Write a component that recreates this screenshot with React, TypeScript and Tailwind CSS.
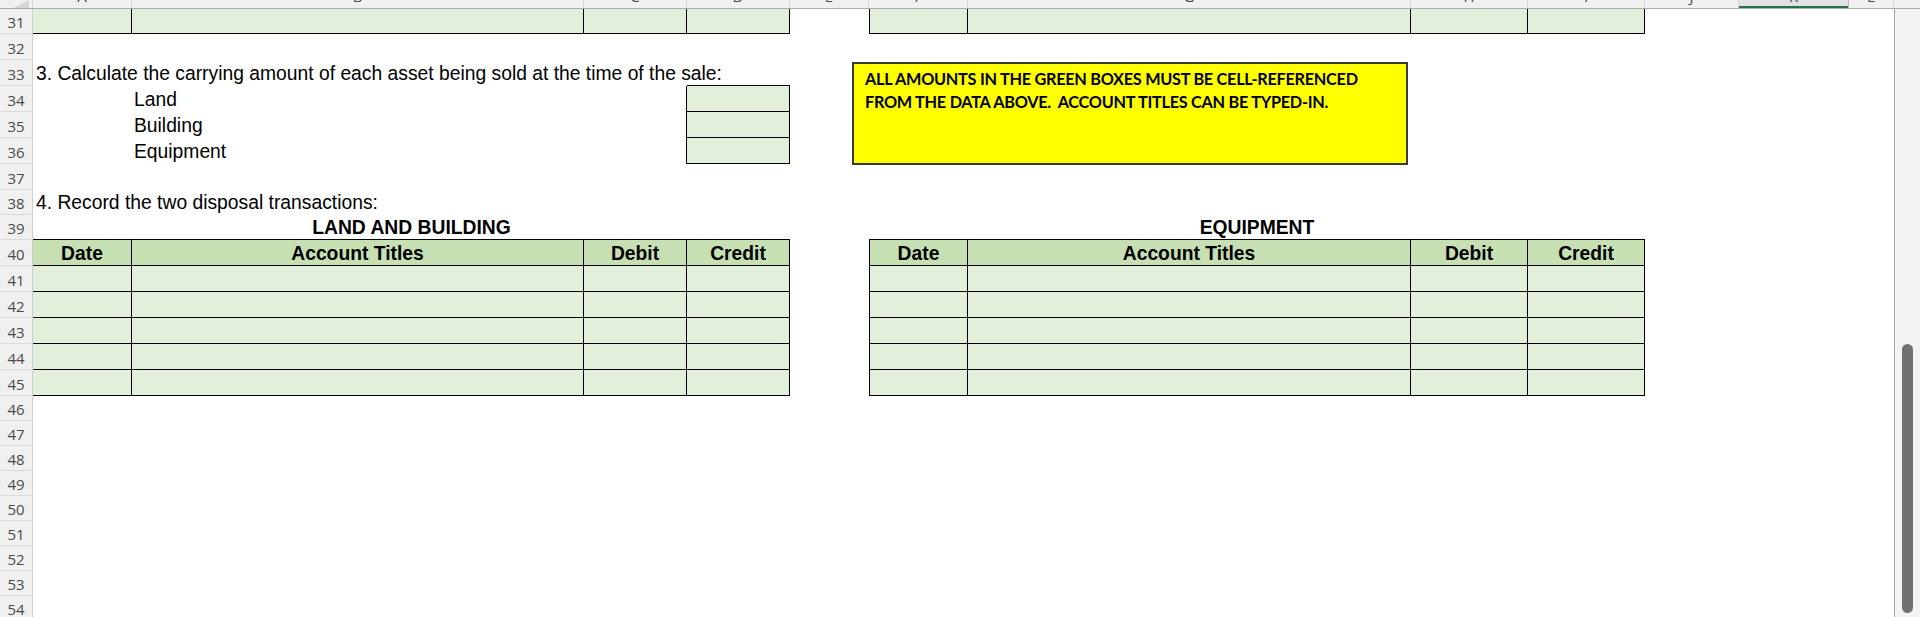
import React from 'react';

type Fill = 'none' | 'body' | 'head';

const W = {
  A: 'w-[99px]',
  B: 'w-[452px]',
  C: 'w-[103px]',
  D: 'w-[103px]',
  E: 'w-[79px]',
  F: 'w-[99px]',
  G: 'w-[443px]',
  H: 'w-[117px]',
  I: 'w-[117px]',
  J: 'w-[94px]',
  K: 'w-[110px]',
  L: 'w-[45px]',
  AD: 'w-[757px]',
  FI: 'w-[776px]',
};

function Cell({
  w,
  fill = 'none',
  r,
  b,
  l,
  center,
  children,
}: {
  w: string;
  fill?: Fill;
  r?: boolean;
  b?: boolean;
  l?: boolean;
  center?: boolean;
  children?: React.ReactNode;
}) {
  const cls = [
    w,
    'shrink-0 h-full flex items-end border-black',
    fill === 'body' ? 'bg-[#e2efda]' : '',
    fill === 'head' ? 'bg-[#c6e0b4]' : '',
    r ? 'border-r' : '',
    b ? 'border-b' : '',
    l ? 'border-l' : '',
    center ? 'justify-center' : '',
  ].join(' ');
  return <div className={cls}>{children}</div>;
}

function Txt({ children, bold, pad }: { children: React.ReactNode; bold?: boolean; pad?: 'left' | 'none' }) {
  return (
    <span
      className={[
        "whitespace-pre text-[19.3px] leading-[19px] text-black font-['Liberation_Sans',Arial,sans-serif]",
        bold ? 'font-bold pb-[2px]' : 'pb-[3px]',
        pad === 'left' ? 'pl-[3px]' : '',
      ].join(' ')}
    >
      {children}
    </span>
  );
}

function HeadTxt({ children }: { children: React.ReactNode }) {
  return (
    <span className="whitespace-pre text-[19.3px] leading-[19px] text-black font-bold pb-[2px] font-['Liberation_Sans',Arial,sans-serif]">
      {children}
    </span>
  );
}

function Empty() {
  return (
    <>
      <Cell w={W.J} />
      <Cell w={W.K} />
      <Cell w={W.L} />
    </>
  );
}

function getCells(n: number): React.ReactNode {
  if (n === 31) {
    return (
      <>
        <Cell w={W.A} fill="body" r b />
        <Cell w={W.B} fill="body" r b />
        <Cell w={W.C} fill="body" r b />
        <Cell w={W.D} fill="body" r b />
        <Cell w={W.E} />
        <Cell w={W.F} fill="body" l r b />
        <Cell w={W.G} fill="body" r b />
        <Cell w={W.H} fill="body" r b />
        <Cell w={W.I} fill="body" r b />
        <Empty />
      </>
    );
  }
  if (n === 33) {
    return (
      <>
        <Cell w={W.A}>
          <Txt pad="left">3. Calculate the carrying amount of each asset being sold at the time of the sale:</Txt>
        </Cell>
        <Cell w={W.B} />
        <Cell w={W.C} />
        <Cell w={W.D} b />
        <Cell w={W.E} />
        <Cell w={W.F} />
        <Cell w={W.G} />
        <Cell w={W.H} />
        <Cell w={W.I} />
        <Empty />
      </>
    );
  }
  if (n >= 34 && n <= 36) {
    const label = n === 34 ? 'Land' : n === 35 ? 'Building' : 'Equipment';
    return (
      <>
        <Cell w={W.A} />
        <Cell w={W.B}>
          <span className="pl-[2px] whitespace-pre text-[19.3px] leading-[19px] pb-[3px] text-black font-['Liberation_Sans',Arial,sans-serif]">
            {label}
          </span>
        </Cell>
        <Cell w={W.C} r />
        <Cell w={W.D} fill="body" r b />
        <Cell w={W.E} />
        <Cell w={W.F} />
        <Cell w={W.G} />
        <Cell w={W.H} />
        <Cell w={W.I} />
        <Empty />
      </>
    );
  }
  if (n === 38) {
    return (
      <>
        <Cell w={W.A}>
          <Txt pad="left">4. Record the two disposal transactions:</Txt>
        </Cell>
      </>
    );
  }
  if (n === 39) {
    return (
      <>
        <Cell w={W.AD} b center>
          <HeadTxt>LAND AND BUILDING</HeadTxt>
        </Cell>
        <Cell w={W.E} />
        <Cell w={W.FI} b center>
          <HeadTxt>EQUIPMENT</HeadTxt>
        </Cell>
        <Empty />
      </>
    );
  }
  if (n === 40) {
    return (
      <>
        <Cell w={W.A} fill="head" r b center>
          <Txt bold>Date</Txt>
        </Cell>
        <Cell w={W.B} fill="head" r b center>
          <Txt bold>Account Titles</Txt>
        </Cell>
        <Cell w={W.C} fill="head" r b center>
          <Txt bold>Debit</Txt>
        </Cell>
        <Cell w={W.D} fill="head" r b center>
          <Txt bold>Credit</Txt>
        </Cell>
        <Cell w={W.E} />
        <Cell w={W.F} fill="head" l r b center>
          <Txt bold>Date</Txt>
        </Cell>
        <Cell w={W.G} fill="head" r b center>
          <Txt bold>Account Titles</Txt>
        </Cell>
        <Cell w={W.H} fill="head" r b center>
          <Txt bold>Debit</Txt>
        </Cell>
        <Cell w={W.I} fill="head" r b center>
          <Txt bold>Credit</Txt>
        </Cell>
        <Empty />
      </>
    );
  }
  if (n >= 41 && n <= 45) {
    return (
      <>
        <Cell w={W.A} fill="body" r b />
        <Cell w={W.B} fill="body" r b />
        <Cell w={W.C} fill="body" r b />
        <Cell w={W.D} fill="body" r b />
        <Cell w={W.E} />
        <Cell w={W.F} fill="body" l r b />
        <Cell w={W.G} fill="body" r b />
        <Cell w={W.H} fill="body" r b />
        <Cell w={W.I} fill="body" r b />
        <Empty />
      </>
    );
  }
  return null;
}

const ROWS: { n: number; h: string }[] = [
  { n: 31, h: 'h-[25px]' },
  { n: 32, h: 'h-[26px]' },
  { n: 33, h: 'h-[26px]' },
  { n: 34, h: 'h-[26px]' },
  { n: 35, h: 'h-[26px]' },
  { n: 36, h: 'h-[26px]' },
  { n: 37, h: 'h-[26px]' },
  { n: 38, h: 'h-[25px]' },
  { n: 39, h: 'h-[25px]' },
  { n: 40, h: 'h-[26px]' },
  { n: 41, h: 'h-[26px]' },
  { n: 42, h: 'h-[26px]' },
  { n: 43, h: 'h-[26px]' },
  { n: 44, h: 'h-[26px]' },
  { n: 45, h: 'h-[26px]' },
  { n: 46, h: 'h-[25px]' },
  { n: 47, h: 'h-[25px]' },
  { n: 48, h: 'h-[25px]' },
  { n: 49, h: 'h-[25px]' },
  { n: 50, h: 'h-[25px]' },
  { n: 51, h: 'h-[25px]' },
  { n: 52, h: 'h-[25px]' },
  { n: 53, h: 'h-[25px]' },
  { n: 54, h: 'h-[25px]' },
];

const COLS: { k: string; w: string; sel?: boolean }[] = [
  { k: 'A', w: W.A },
  { k: 'B', w: W.B },
  { k: 'C', w: W.C },
  { k: 'D', w: W.D },
  { k: 'E', w: W.E },
  { k: 'F', w: W.F },
  { k: 'G', w: W.G },
  { k: 'H', w: W.H },
  { k: 'I', w: W.I },
  { k: 'J', w: W.J },
  { k: 'K', w: W.K, sel: true },
  { k: 'L', w: W.L },
];

function ColHeader() {
  return (
    <div className="flex h-[9px] shrink-0 bg-[#f0f0f0] border-b border-[#ababab] overflow-hidden">
      <div className="w-[33px] shrink-0 h-full relative border-r border-[#d4d4d4]">
        <svg className="absolute left-[13px] top-0" width="16" height="8" viewBox="0 0 16 8">
          <polygon points="16,0 16,8 0,8" fill="#d6d6d6" />
        </svg>
      </div>
      {COLS.map((c) => (
        <div
          key={c.k}
          className={[
            c.w,
            'shrink-0 h-full flex items-end justify-center border-r',
            c.sel ? 'bg-[#e1e1e1] border-[#bdbdbd] shadow-[inset_0_-2px_0_#217346]' : 'border-[#d4d4d4]',
          ].join(' ')}
        >
          <span
            className={[
              "text-[15px] leading-[15px] mb-[4px] font-['Open_Sans',sans-serif]",
              c.sel ? 'text-[#1e6b41]' : 'text-[#4a4a4a]',
            ].join(' ')}
          >
            {c.k}
          </span>
        </div>
      ))}
    </div>
  );
}

function RowHead({ n }: { n: number }) {
  return (
    <div className="w-[33px] shrink-0 h-full flex items-end justify-center bg-[#f0f0f0] border-r border-b border-r-[#cfcfcf] border-b-[#dadada]">
      <span className="text-[15px] leading-[15px] pb-[3px] text-[#4a4a4a] font-['Open_Sans',sans-serif]">{n}</span>
    </div>
  );
}

export default function App() {
  return (
    <div className="w-[1920px] h-[617px] overflow-hidden bg-white flex relative">
      <div className="w-[1894px] shrink-0 flex flex-col">
        <ColHeader />
        {ROWS.map((r) => (
          <div key={r.n} className={`flex shrink-0 ${r.h}`}>
            <RowHead n={r.n} />
            {getCells(r.n)}
          </div>
        ))}
      </div>
      <div className="w-[26px] shrink-0 flex flex-col">
        <div className="h-[9px] shrink-0 bg-[#f0f0f0] border-b border-[#ababab]" />
        <div className="flex-1 bg-[#f3f3f3] border-l border-[#a6a6a6] flex flex-col items-start">
          <div className="ml-[7px] mt-[335px] w-[11px] h-[269px] rounded-full bg-[#717171]" />
        </div>
      </div>

      <div className="absolute left-[852px] top-[62px] w-[556px] h-[103px] bg-[#ffff00] border-2 border-[#3a3a3a] pl-[11px] pt-[4px] font-['Lato',sans-serif] font-bold text-[16.3px] tracking-[-0.28px] leading-[22.7px] text-black">
        <div className="whitespace-pre">ALL AMOUNTS IN THE GREEN BOXES MUST BE CELL-REFERENCED</div>
        <div className="whitespace-pre">FROM THE DATA ABOVE.  ACCOUNT TITLES CAN BE TYPED-IN.</div>
      </div>
    </div>
  );
}
